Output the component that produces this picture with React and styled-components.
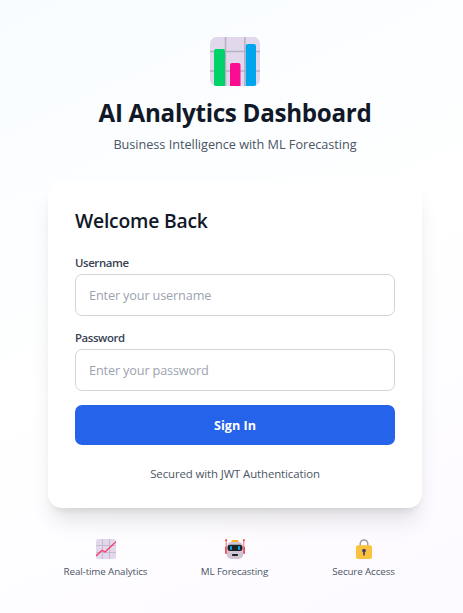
import React from "react";
import styled, { createGlobalStyle } from "styled-components";

const GlobalStyle = createGlobalStyle`
  *, *::before, *::after { box-sizing: border-box; }
  body {
    margin: 0;
    font-family: "Segoe UI", "Open Sans", "Noto Sans", sans-serif;
    overflow: hidden;
  }
  h1, h2, p { margin: 0; }
`;

const Page = styled.main`
  width: 470px;
  height: 613px;
  padding: 37px 48px 0;
  background: linear-gradient(155deg, #f8fcff 0%, #ffffff 50%, #fcf9ff 100%);
`;

const Header = styled.header`
  display: flex;
  flex-direction: column;
  align-items: center;
  height: 144px;
`;

const Text = styled.span`
  display: block;
  white-space: nowrap;
`;

const Title = styled(Text).attrs({ as: "h1" })`
  margin-top: 9px;
  font-size: 24.2px;
  line-height: 36px;
  font-weight: 700;
  letter-spacing: -0.3px;
  color: #111827;
`;

const Subtitle = styled(Text).attrs({ as: "p" })`
  margin-top: 3px;
  font-size: 12.7px;
  line-height: 20px;
  letter-spacing: -0.03px;
  color: #4b5563;
`;

const Card = styled.section`
  width: 374px;
  height: 327px;
  padding: 26px 27px;
  background: #fff;
  border-radius: 14px;
  box-shadow: 0 17px 21px -4px rgba(0, 0, 0, 0.1), 0 7px 8px -5px rgba(0, 0, 0, 0.1);
`;

const Heading = styled(Text).attrs({ as: "h2" })`
  font-size: 19.3px;
  line-height: 27px;
  font-weight: 600;
  letter-spacing: -0.2px;
  color: #111827;
`;

const Form = styled.form`
  display: flex;
  flex-direction: column;
  margin-top: 21px;
`;

const Field = styled.div`
  height: 75px;
`;

const Label = styled.label`
  display: block;
  height: 19px;
  font-size: 11.4px;
  line-height: 16px;
  font-weight: 600;
  letter-spacing: -0.4px;
  color: #374151;
`;

const Input = styled.input`
  display: block;
  width: 100%;
  height: 42px;
  padding: 0 13px;
  border: 1px solid #d1d5db;
  border-radius: 7px;
  background: #fff;
  font: 12.7px "Segoe UI", "Open Sans", "Noto Sans", sans-serif;
  letter-spacing: -0.15px;
  outline: none;
  &::placeholder { color: #9ca3af; opacity: 1; }
`;

const Button = styled.button`
  height: 40px;
  padding: 0;
  border: 0;
  border-radius: 7px;
  background: #2563eb;
  color: #fff;
  font: 700 12.6px "Segoe UI", "Open Sans", "Noto Sans", sans-serif;
`;

const Note = styled(Text).attrs({ as: "p" })`
  margin-top: 20px;
  font-size: 11.4px;
  line-height: 17px;
  letter-spacing: -0.1px;
  text-align: center;
  color: #4b5563;
`;

const Features = styled.section`
  display: grid;
  grid-template-columns: repeat(3, 115px);
  column-gap: 14px;
  margin-top: 31px;
`;

const Feature = styled.div`
  display: flex;
  flex-direction: column;
  align-items: center;
`;

const Caption = styled(Text)`
  margin-top: 6px;
  font-size: 9.8px;
  line-height: 14px;
  letter-spacing: -0.12px;
  color: #4b5563;
`;

const BarChart = () => (
  <svg width="50" height="49" viewBox="0 0 50 49">
    <defs>
      <clipPath id="chart-tile"><rect width="50" height="49" rx="6.5" /></clipPath>
    </defs>
    <g clipPath="url(#chart-tile)">
      <rect width="50" height="49" fill="#e1d8ec" />
      <path d="M15.5 0V49M34.8 0V49M0 14.5H50M0 34H50" stroke="#b9afc5" strokeWidth="1.5" />
      <path d="M4 49V14a2 2 0 0 1 2-2h7a2 2 0 0 1 2 2v35z" fill="#00d26a" />
      <path d="M20 49V28a2 2 0 0 1 2-2h6.5a2 2 0 0 1 2 2v21z" fill="#fb0d91" />
      <path d="M35.8 49V9a2 2 0 0 1 2-2H44a2 2 0 0 1 2 2v40z" fill="#00a6ed" />
    </g>
  </svg>
);

const TrendChart = () => (
  <svg width="20" height="20" viewBox="0 0 20 20">
    <rect width="20" height="20" rx="2.5" fill="#e1d8ec" />
    <path d="M6.5 0V20M13.5 0V20M0 6.5H20M0 13.5H20" stroke="#bfb5cb" strokeWidth=".8" />
    <path d="M0 17 6 11.3 9 13 20 2.7" fill="none" stroke="#f8386b" strokeWidth="1.3" strokeLinejoin="round" />
  </svg>
);

const Robot = () => (
  <svg width="20" height="20" viewBox="0 0 20 20">
    <path d="M1.2 1V9M18.8 1V9" stroke="#f45b65" strokeWidth=".9" />
    <circle cx="1.2" cy="1.2" r="1" fill="#f8312f" />
    <circle cx="18.8" cy="1.2" r="1" fill="#f8312f" />
    <rect x="0" y="7.5" width="3" height="7.5" rx="1" fill="#f44b50" />
    <rect x="17" y="7.5" width="3" height="7.5" rx="1" fill="#f44b50" />
    <rect x="6.5" y="1" width="7" height="3" rx="1" fill="#ffb02e" />
    <rect x="1.7" y="3" width="16.6" height="17" rx="5" fill="#cdc4d6" />
    <rect x="2.6" y="5.8" width="14.8" height="6.2" rx="2.5" fill="#212121" />
    <rect x="5" y="7" width="2" height="4" rx=".8" fill="#00a6ed" />
    <rect x="13" y="7" width="2" height="4" rx=".8" fill="#00a6ed" />
    <rect x="7" y="15" width="6" height="2" rx=".7" fill="#212121" />
  </svg>
);

const Lock = () => (
  <svg width="20" height="20" viewBox="0 0 20 20">
    <path d="M6.2 8V4.8a3.8 3.8 0 0 1 7.6 0V8" fill="none" stroke="#9b9b9b" strokeWidth="1.4" />
    <rect x="2" y="6.2" width="16" height="13.8" rx="2" fill="#f9c23c" />
    <circle cx="10" cy="11.6" r="1.9" fill="#433b6b" />
    <rect x="9.2" y="12" width="1.6" height="4.6" rx=".7" fill="#433b6b" />
  </svg>
);

export default function App() {
  return (
    <>
      <GlobalStyle />
      <Page>
        <Header>
          <BarChart />
          <Title>AI Analytics Dashboard</Title>
          <Subtitle>Business Intelligence with ML Forecasting</Subtitle>
        </Header>
        <Card>
          <Heading>Welcome Back</Heading>
          <Form>
            <Field>
              <Label htmlFor="username">Username</Label>
              <Input id="username" placeholder="Enter your username" />
            </Field>
            <Field>
              <Label htmlFor="password">Password</Label>
              <Input id="password" type="password" placeholder="Enter your password" />
            </Field>
            <Button type="button">Sign In</Button>
          </Form>
          <Note>Secured with JWT Authentication</Note>
        </Card>
        <Features>
          <Feature><TrendChart /><Caption>Real-time Analytics</Caption></Feature>
          <Feature><Robot /><Caption>ML Forecasting</Caption></Feature>
          <Feature><Lock /><Caption>Secure Access</Caption></Feature>
        </Features>
      </Page>
    </>
  );
}
